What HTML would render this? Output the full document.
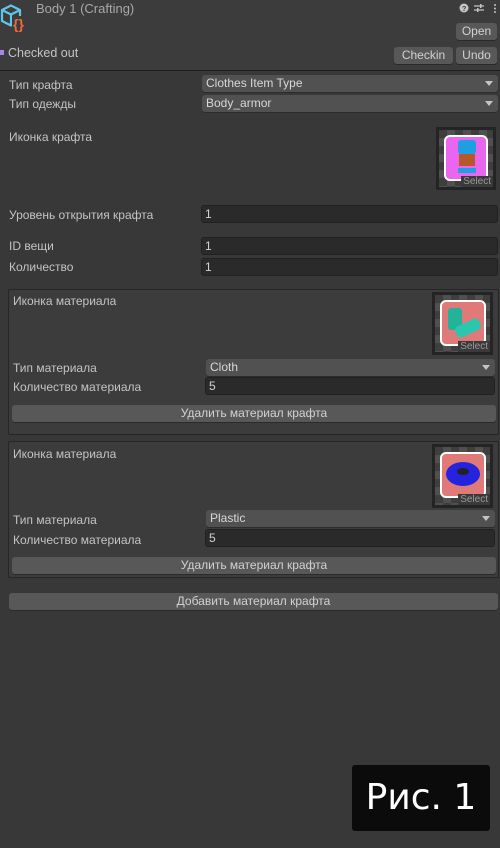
<!DOCTYPE html>
<html><head><meta charset="utf-8"><style>
*{margin:0;padding:0;box-sizing:border-box}
body{width:500px;height:848px;background:#383838;font-family:"Liberation Sans","Noto Sans CJK SC",sans-serif;font-size:12px;color:#c4c4c4;position:relative;overflow:hidden}
.a{position:absolute}
.hdr{left:0;top:0;width:500px;height:71px;background:#3c3c3c;border-bottom:1px solid #1f1f1f}
.btn{position:absolute;background:#585858;border-radius:3px;color:#d2d2d2;text-align:center;font-size:12px;line-height:17px;box-shadow:0 1px 0 #2a2a2a}
.lbl{position:absolute;line-height:14px}
.dd{position:absolute;background:#515151;border-radius:3px;height:17px;line-height:17px;padding-left:4px;color:#d8d8d8;box-shadow:0 1px 0 #2c2c2c}
.dd:after{content:"";position:absolute;right:5px;top:6px;border-left:4px solid transparent;border-right:4px solid transparent;border-top:5px solid #c4c4c4}
.tf{position:absolute;background:#2a2a2a;border:1px solid #212121;border-radius:3px;height:18px;line-height:16px;padding-left:3px;color:#d2d2d2}
.box{position:absolute;background:#3c3c3c;border:1px solid #262626;border-radius:2px}
.ico{position:absolute;background:#242424;padding:3px}
.ico .in{width:100%;height:100%;background:repeating-conic-gradient(#505050 0 25%,#3e3e3e 0 50%) 0 0/16px 16px;position:relative}
.sel{position:absolute;right:0;bottom:0;background:#3a3a3a;color:#9a9a9a;font-size:10px;line-height:11px;padding:0 2px}
</style></head><body>
<div class="a hdr"></div>
<svg class="a" style="left:0;top:2px" width="34" height="34" viewBox="0 0 34 34">
<path d="M2 8 L11 3.5 L20 8 L20 19 L11 23.5 L2 19 Z M2 8 L11 12.5 L20 8 M11 12.5 L11 23.5" fill="none" stroke="#5ec6ea" stroke-width="2.2" stroke-linejoin="round"/>
<rect x="12" y="14" width="16" height="16" fill="#3c3c3c"/>
<text x="13" y="27" font-family="Liberation Sans" font-size="14" font-weight="bold" fill="#f2693a">{}</text>
</svg>
<div class="lbl" style="left:36px;top:2px;font-size:13px;color:#a8a8a8">Body 1 (Crafting)</div>
<svg class="a" style="left:459px;top:3px" width="40" height="12">
<circle cx="5" cy="5" r="4.5" fill="#c4c4c4"/><text x="3" y="8" font-size="7" font-weight="bold" fill="#3c3c3c">?</text>
<path d="M15 3h10M15 7h10" stroke="#c4c4c4" stroke-width="1.3"/><rect x="21" y="1" width="1.5" height="4" fill="#c4c4c4"/><rect x="18" y="5" width="1.5" height="4" fill="#c4c4c4"/>
<circle cx="36" cy="2" r="1" fill="#c4c4c4"/><circle cx="36" cy="5.5" r="1" fill="#c4c4c4"/><circle cx="36" cy="9" r="1" fill="#c4c4c4"/>
</svg>
<div class="btn" style="left:456px;top:23px;width:41px">Open</div>
<div class="a" style="left:0;top:50px;width:4px;height:5px;background:#a987e6"></div>
<div class="lbl" style="left:8px;top:46px;font-size:12.5px">Checked out</div>
<div class="btn" style="left:394px;top:47px;width:59px">Checkin</div>
<div class="btn" style="left:456px;top:47px;width:41px">Undo</div>

<div class="lbl" style="left:9px;top:78px">Тип крафта</div>
<div class="dd" style="left:202px;top:75px;width:296px">Clothes Item Type</div>
<div class="lbl" style="left:9px;top:97px">Тип одежды</div>
<div class="dd" style="left:202px;top:95px;width:296px">Body_armor</div>
<div class="lbl" style="left:9px;top:130px">Иконка крафта</div>
<div class="ico" style="left:436px;top:127px;width:60px;height:63px"><div class="in">
<div class="a" style="left:5px;top:5px;width:44px;height:46px;background:#ea66ef;border:2px solid #fff;border-radius:6px"></div>
<div class="a" style="left:19px;top:10px;width:18px;height:14px;background:#1e9fe2;border-radius:3px"></div>
<div class="a" style="left:20px;top:24px;width:16px;height:12px;background:#b7582a"></div>
<div class="a" style="left:19px;top:38px;width:18px;height:5px;background:#1e9fe2"></div>
<div class="sel">Select</div></div></div>

<div class="lbl" style="left:9px;top:208px">Уровень открытия крафта</div>
<div class="tf" style="left:201px;top:205px;width:297px">1</div>
<div class="lbl" style="left:9px;top:239px">ID вещи</div>
<div class="tf" style="left:201px;top:237px;width:297px">1</div>
<div class="lbl" style="left:9px;top:260px">Количество</div>
<div class="tf" style="left:201px;top:258px;width:297px">1</div>

<div class="box" style="left:8px;top:289px;width:491px;height:146px"></div>
<div class="lbl" style="left:13px;top:294px">Иконка материала</div>
<div class="ico" style="left:432px;top:292px;width:61px;height:63px"><div class="in">
<div class="a" style="left:5px;top:5px;width:46px;height:46px;background:#e07a78;border:2px solid #fff;border-radius:6px"></div>
<div class="a" style="left:13px;top:13px;width:14px;height:22px;background:#22b39a;border-radius:3px"></div>
<div class="a" style="left:20px;top:27px;width:26px;height:12px;background:#2ac7ae;border-radius:4px;transform:rotate(-25deg)"></div>
<div class="sel">Select</div></div></div>
<div class="lbl" style="left:13px;top:361px">Тип материала</div>
<div class="dd" style="left:206px;top:359px;width:289px">Cloth</div>
<div class="lbl" style="left:13px;top:380px">Количество материала</div>
<div class="tf" style="left:205px;top:377px;width:290px">5</div>
<div class="btn" style="left:12px;top:405px;width:484px">Удалить материал крафта</div>

<div class="box" style="left:8px;top:441px;width:491px;height:137px"></div>
<div class="lbl" style="left:13px;top:447px">Иконка материала</div>
<div class="ico" style="left:432px;top:444px;width:61px;height:64px"><div class="in">
<div class="a" style="left:5px;top:5px;width:46px;height:46px;background:#e07a78;border:2px solid #fff;border-radius:6px"></div>
<div class="a" style="left:11px;top:15px;width:34px;height:24px;background:#2323e0;border-radius:50%"></div>
<div class="a" style="left:22px;top:21px;width:12px;height:7px;background:#222;border-radius:50%"></div>
<div class="sel">Select</div></div></div>
<div class="lbl" style="left:13px;top:513px">Тип материала</div>
<div class="dd" style="left:206px;top:510px;width:289px">Plastic</div>
<div class="lbl" style="left:13px;top:533px">Количество материала</div>
<div class="tf" style="left:205px;top:529px;width:290px">5</div>
<div class="btn" style="left:12px;top:557px;width:484px">Удалить материал крафта</div>

<div class="btn" style="left:9px;top:593px;width:489px">Добавить материал крафта</div>

<div class="a" style="left:352px;top:765px;width:138px;height:66px;background:#0b0b0b;border-radius:3px;color:#fff;font-size:36px;line-height:66px;text-align:center;font-family:'DejaVu Sans',sans-serif">Рис. 1</div>
</body></html>
